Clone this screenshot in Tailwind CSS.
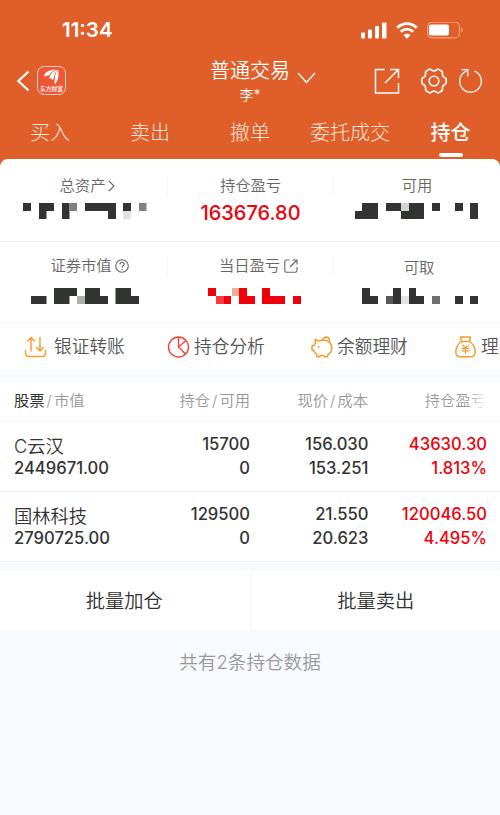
<!DOCTYPE html>
<html lang="zh-CN">
<head>
    <meta charset="UTF-8">
    <meta name="viewport" content="width=device-width, initial-scale=1.0">
    <title>普通交易 - 持仓</title>

    <script src="https://cdn.jsdelivr.net/npm/@tailwindcss/browser@4"></script>

    <style>
        body {
            font-family: 'Inter', 'Noto Sans CJK SC', sans-serif;
        }
    </style>
</head>
<body class="bg-[#f7faff] min-h-screen overflow-hidden">
    <header class="bg-[#df5e29] text-white h-[159px]">
        <!-- Status bar -->
        <div class="h-[60px] pl-[62px] pr-[37px] flex items-center justify-between">
            <span class="text-[20.500px] leading-6 font-semibold">11:34</span>
            <div class="flex items-center">
                <svg class="w-[26px] h-[17px] mr-[9px]" viewBox="0 0 26 17" fill="currentColor">
                    <rect x="0" y="10.500" width="4" height="6" rx="1"/>
                    <rect x="7" y="7.500" width="4" height="9" rx="1"/>
                    <rect x="14" y="4" width="4" height="12.500" rx="1"/>
                    <rect x="21" y=".5" width="4.500" height="16" rx="1"/>
                </svg>
                <svg class="w-[22px] h-[17px] mr-[9px]" viewBox="0 0 22 17" fill="none" stroke="currentColor" stroke-width="2.800">
                    <path d="M1.200 5.800C6.800 .2 15.200 .2 20.800 5.800"/>
                    <path d="M4.800 9.800C8.400 6.300 13.600 6.300 17.200 9.800"/>
                    <path d="M7.600 13.200C9.600 11.300 12.400 11.300 14.400 13.200L11 16.700Z" fill="currentColor" stroke="none"/>
                </svg>
                <svg class="w-9 h-[17px]" viewBox="0 0 36 17" fill="none">
                    <rect x=".6" y=".1" width="31.800" height="15.800" rx="4.500" stroke="#f2a074" stroke-width="1.200"/>
                    <rect x="2" y="2.500" width="20" height="11" rx="2" fill="#fff"/>
                    <path d="M34 5.500V10.500C36.500 9.500 36.500 6.500 34 5.500Z" fill="#f2a074"/>
                </svg>
            </div>
        </div>

        <!-- Title bar -->
        <div class="h-[50px] pl-4 pr-[17px] grid grid-cols-[194px_107px_1fr]">
            <div class="flex items-center pb-[9px]">
                <svg class="w-[14px] h-[22px] mr-[7px]" viewBox="0 0 14 22" fill="none" stroke="currentColor" stroke-width="2.200">
                    <path d="M12.500 1.500L2.300 11L12.500 20.500"/>
                </svg>
                <svg class="w-[29px] h-[29px]" viewBox="0 0 29 29">
                    <rect x=".5" y=".5" width="28" height="28" rx="6.500" fill="#f05535" stroke="#fbd0c0"/>
                    <path d="M7 11C7 6.500 11 4 19 3.500C14 5.500 13 8 12 9.500C10 9.500 8.500 10 7 11Z" fill="#fff"/>
                    <path d="M12.300 12.500C13 8 16 5 20.500 3.500C17.500 6.500 17.500 10 16 14C14.500 12.800 13.500 12.500 12.300 12.500Z" fill="#fff"/>
                    <path d="M21 3.500C22 8 22 14.500 17.500 18.500C18 13.500 17 8 21 3.500Z" fill="#fff"/>
                    <text x="14.500" y="25.300" text-anchor="middle" font-size="5.800" font-weight="500" fill="#fff">东方财富</text>
                </svg>
            </div>
            <div class="flex flex-col">
                <div class="flex items-center h-[23px]">
                    <span class="text-[20px] leading-[23px] whitespace-nowrap font-[350]">普通交易</span>
                    <svg class="w-[19px] h-3 ml-[7px] mt-[13px] shrink-0" viewBox="0 0 19 12" fill="none" stroke="currentColor" stroke-width="1.400">
                        <path d="M1 1L9.500 10.500L18 1"/>
                    </svg>
                </div>
                <span class="text-[14px] leading-[24px] w-[80px] text-center font-[350]">李*</span>
            </div>
            <div class="flex items-center justify-end pb-[9px]">
                <svg class="w-[26px] h-[26px] mr-[21px]" viewBox="0 0 26 26" fill="none" stroke="currentColor" stroke-width="1.500">
                    <path d="M10.500 1.500H1.500V25H24.500V15"/>
                    <path d="M16 1.500H24.500V10M24.500 1.500L11 15"/>
                </svg>
                <svg class="w-[26px] h-[26px] mr-3" viewBox="0 0 26 26" fill="none" stroke="currentColor" stroke-width="1.600" stroke-linejoin="round">
                    <path d="M8.200 1.400Q9 .7 10 1.600Q13 4.200 16 1.600Q17 .7 17.800 1.400L20.900 3.200Q21.700 3.800 21.400 5Q21 8.500 24 9.800Q25.200 10.300 25.200 11.300V14.700Q25.200 15.700 24 16.200Q21 17.500 21.400 21Q21.700 22.200 20.900 22.800L17.800 24.600Q17 25.300 16 24.400Q13 21.800 10 24.400Q9 25.300 8.200 24.600L5.100 22.800Q4.300 22.200 4.600 21Q5 17.500 2 16.200Q.8 15.700 .8 14.700V11.300Q.8 10.300 2 9.800Q5 8.500 4.600 5Q4.300 3.800 5.100 3.200Z"/>
                    <circle cx="13" cy="13" r="4.800"/>
                </svg>
                <svg class="w-6 h-[25px]" viewBox="0 0 24 25" fill="none" stroke="currentColor" stroke-width="1.300">
                    <path d="M15.500 3.200A10.800 10.800 0 1 1 7.500 3.200"/>
                    <path d="M2.500 1.700H8.800V8.500"/>
                </svg>
            </div>
        </div>

        <!-- Tabs -->
        <nav class="grid grid-cols-5 text-center text-[20px] leading-[47px] font-light text-[#fde3d6] h-[49px]">
            <a>买入</a>
            <a>卖出</a>
            <a>撤单</a>
            <a class="whitespace-nowrap">委托成交</a>
            <a class="font-medium text-white flex flex-col items-center pl-px">
                <span class="h-[43px]">持仓</span>
                <span class="w-6 h-1 rounded-full bg-white"></span>
            </a>
        </nav>
    </header>

    <main>
        <!-- Account summary, hidden amounts are drawn as blocks -->
        <div class="bg-[#df5e29]">
            <section class="bg-white rounded-t-[8px] text-[15.300px] leading-5 text-[#666] font-[350]">
                <div class="h-[83px] grid grid-cols-[167px_167px_1fr] border-b border-[#f4f4f4]">
                    <div class="flex flex-col items-center pt-[17px]">
                        <div class="flex items-center h-5 pl-2">总资产
                            <svg class="w-[7px] h-3 ml-[3px]" viewBox="0 0 7 12" fill="none" stroke="currentColor" stroke-width="1.200"><path d="M.8 .8L6 6L.8 11.200"/></svg>
                        </div>
                        <svg class="w-[167px] h-4 mt-[7px]" viewBox="0 0 167 16" fill="#323431">
                            <path d="M23 0h8v8h-8zM39 0h15v8h-7.500v8H39zM62 0h7.500v16H62zM85 0h31v16h-8V8H85zM123 0h8v8h-8z"/>
                            <path fill="#808080" d="M69.500 0H77v8h-7.500zM139 0h7.500v8H139z"/>
                            <path fill="#e4e0e5" d="M123 8h8v8h-8z"/>
                        </svg>
                    </div>
                    <div class="flex flex-col items-center pt-[17px]">
                        <div class="w-full border-x border-[#f9f5f5] text-center">持仓盈亏</div>
                        <div class="text-[20px] leading-6 mt-[5px] font-medium text-[#f00009]">163676.80</div>
                    </div>
                    <div class="flex flex-col items-center pt-[17px]">
                        <div>可用</div>
                        <svg class="w-[166px] h-4 mt-[7px]" viewBox="334 0 166 16" fill="#323431">
                            <path d="M355 8h7V0h16v16h-23zM386 0h15v8h-15zM409 0h15v16h-23V8h8zM432 0h8v8h-8zM455 0h8v8h-8zM470 0h8v16h-8z"/>
                            <path fill="#d4d4d4" d="M401 0h8v8h-8z"/>
                        </svg>
                    </div>
                </div>
                <div class="h-[82px] grid grid-cols-[167px_167px_1fr] border-b border-[#f8f8f8]">
                    <div class="flex flex-col items-center pt-[14px]">
                        <div class="flex items-center h-5 pl-3">证券市值
                            <svg class="w-[14px] h-[14px] ml-[3px]" viewBox="0 0 14 14" fill="none" stroke="currentColor" stroke-width="1.100">
                                <circle cx="7" cy="7" r="6.300"/>
                                <path d="M4.900 5.400C4.900 2.500 9.100 2.600 9.100 5.200C9.100 6.800 7 6.700 7 8.800M7 9.900V11.200"/>
                            </svg>
                        </div>
                        <svg class="w-[167px] h-4 mt-3" viewBox="0 0 167 16" fill="#323431">
                            <path d="M31 8h15.500v8H31zM54 0h23v8h-7.500v8H54zM85 0h15v8h8v8H85zM115.500 0H131v8h8v8h-23.500z"/>
                            <path fill="#b0adb0" d="M77 8h8v8h-8z"/>
                        </svg>
                    </div>
                    <div class="flex flex-col items-center pt-[14px]">
                        <div class="flex items-center justify-center h-5 w-full pl-[16px] border-x border-[#f9f5f5]">当日盈亏
                            <svg class="w-[14px] h-[14px] ml-[4px]" viewBox="0 0 14 14" fill="none" stroke="currentColor" stroke-width="1.100">
                                <path d="M5.500 1H2.500Q.8 1 .8 2.700V11.500Q.8 13.200 2.500 13.200H11.300Q13 13.200 13 11.500V8"/>
                                <path d="M8.500 1H13V5.500M13 1L6 8"/>
                            </svg>
                        </div>
                        <svg class="w-[167px] h-4 mt-3" viewBox="167 0 167 16" fill="#f00009">
                            <path d="M208 0h8v8h-8zM224 8h7v8h-7zM239 0h8v8h8v8h-16zM262 0h8v8h15v8h-23zM293 8h8v8h-8z"/>
                            <path fill="#fd3b3e" d="M216 8h8v8h-8z"/>
                            <path fill="#f0ac94" d="M232 0h7v8h-7z"/>
                        </svg>
                    </div>
                    <div class="flex flex-col items-center pt-4">
                        <div class="pl-1">可取</div>
                        <svg class="w-[166px] h-4 mt-[10px]" viewBox="334 0 166 16" fill="#323431">
                            <path d="M362 0h8v8h8v8h-16zM393 0h8v16h-8zM409 0h7v8h8v8h-15zM455 8h8v8h-8zM470 8h8v8h-8z"/>
                            <path fill="#595759" d="M386 8h7v8h-7z"/>
                            <path fill="#e6e1e6" d="M401 8h8v8h-8z"/>
                            <path fill="#706d70" d="M432 8h8v8h-8z"/>
                        </svg>
                    </div>
                </div>
            </section>
        </div>

        <section class="bg-white h-[46px] flex items-center overflow-hidden text-[17.700px] leading-6 font-[350] text-[#555] whitespace-nowrap">
            <div class="w-[143px] pl-6 flex items-center shrink-0">
                <svg class="w-[23px] h-[22px] mr-[7px]" viewBox="0 0 23 22" fill="none" stroke="#f9a02c" stroke-width="1.500" stroke-linecap="round">
                    <path d="M1.500 14.500V17Q1.500 20.500 5 20.500H18Q21.500 20.500 21.500 17V14.500"/>
                    <path d="M7 15V2M3.500 5L7 1.500L10.500 5M16 1.500V14.500M12.500 11.500L16 15L19.500 11.500"/>
                </svg>
                银证转账
            </div>
            <div class="w-[143px] pl-6 flex items-center shrink-0">
                <svg class="w-[23px] h-[22px] mr-1" viewBox="0 0 23 22" fill="none" stroke="#f6423b" stroke-width="1.400">
                    <circle cx="11.500" cy="11" r="10"/>
                    <path d="M11.500 1V11L18.600 18M11.500 11L18.500 5"/>
                </svg>
                持仓分析
            </div>
            <div class="w-[143px] pl-[25px] flex items-center shrink-0">
                <svg class="w-[22px] h-[22px] mr-1" viewBox="0 0 22 22" fill="none" stroke="#f79a2c" stroke-width="1.500" stroke-linejoin="round">
                    <path d="M4 3.500L7.500 5Q9 4.300 11 4.300H14Q20.800 5.500 20.800 12Q20.500 16.500 17 18.500L16.500 20.800H13.500L12.500 19.500H9.500L8.500 20.800H6L5.200 17.800Q3.500 16.500 2.800 14.500L1 14V10L3 9.300Q3.500 8 4.500 7Z"/>
                    <path d="M11.500 4Q12.500 1 15.500 1Q18.700 1.300 18.600 5.500"/>
                    <circle cx="7.500" cy="11" r="1" fill="#f79a2c" stroke="none"/>
                </svg>
                余额理财
            </div>
            <div class="w-[143px] pl-[26px] flex items-center shrink-0">
                <svg class="w-[21px] h-[22px] mr-[5px]" viewBox="0 0 21 22" fill="none" stroke="#f79a2c" stroke-width="1.400" stroke-linejoin="round">
                    <path d="M6.500 5.500L5.500 1H15.500L14.500 5.500Z"/>
                    <path d="M6.500 5.500Q.8 9.500 .8 16Q.8 20.800 5.500 20.800H15.500Q20.200 20.800 20.200 16Q20.200 9.500 14.500 5.500"/>
                    <path stroke-width="1.200" d="M7.300 8.800L10.500 12L13.700 8.800M6.500 12.300H14.500M6.500 14.800H14.500M10.500 12V18"/>
                </svg>
                理财
            </div>
        </section>

        <!-- Positions -->
        <section class="mt-3 bg-white text-[#333] overflow-hidden">
            <div class="h-[39px] px-[14px] pt-px grid grid-cols-[126px_110px_118px_118px] items-center text-[15.300px] font-[350] text-[#999] border-b border-[#f8f8f8] whitespace-nowrap">
                <div><span class="font-normal text-[#333]">股票</span><span class="mx-[2px]">/</span>市值</div>
                <div class="text-right">持仓<span class="mx-[2px]">/</span>可用</div>
                <div class="text-right">现价<span class="mx-[2px]">/</span>成本</div>
                <div class="text-right bg-linear-to-r from-[#999] from-85% to-white to-100% bg-clip-text text-transparent">持仓盈亏</div>
            </div>
            <div class="h-[71px] pl-[14px] pr-[13px] pt-[11px] grid grid-cols-[126px_110px_118.500px_118.500px] grid-rows-[24px_24px] text-[16.600px] leading-6 font-medium text-right border-b border-[#f2f2f2]">
                <div class="text-left text-[18.300px] font-[350] pt-[2px]">C云汉</div>
                <div>15700</div>
                <div>156.030</div>
                <div class="text-[#f00009]">43630.30</div>
                <div class="text-left">2449671.00</div>
                <div>0</div>
                <div>153.251</div>
                <div class="text-[#f00009]">1.813%</div>
            </div>
            <div class="h-[70px] pl-[14px] pr-[13px] pt-[10px] grid grid-cols-[126px_110px_118.500px_118.500px] grid-rows-[24px_24px] text-[16.600px] leading-6 font-medium text-right border-b border-[#f2f2f2]">
                <div class="text-left text-[18.300px] font-[350] pt-[2px]">国林科技</div>
                <div>129500</div>
                <div>21.550</div>
                <div class="text-[#f00009]">120046.50</div>
                <div class="text-left">2790725.00</div>
                <div>0</div>
                <div>20.623</div>
                <div class="text-[#f00009]">4.495%</div>
            </div>
        </section>

        <div class="mt-[9px] grid grid-cols-2 gap-[3px] text-center text-[19.300px] leading-[59px] text-[#333] font-[350]">
            <button class="bg-white h-[59px] pt-px">批量加仓</button>
            <button class="bg-white h-[59px] pt-px">批量卖出</button>
        </div>

        <p class="mt-5 text-center text-[18.600px] leading-6 font-[350] text-[#999]">共有2条持仓数据</p>
    </main>
</body>
</html>
